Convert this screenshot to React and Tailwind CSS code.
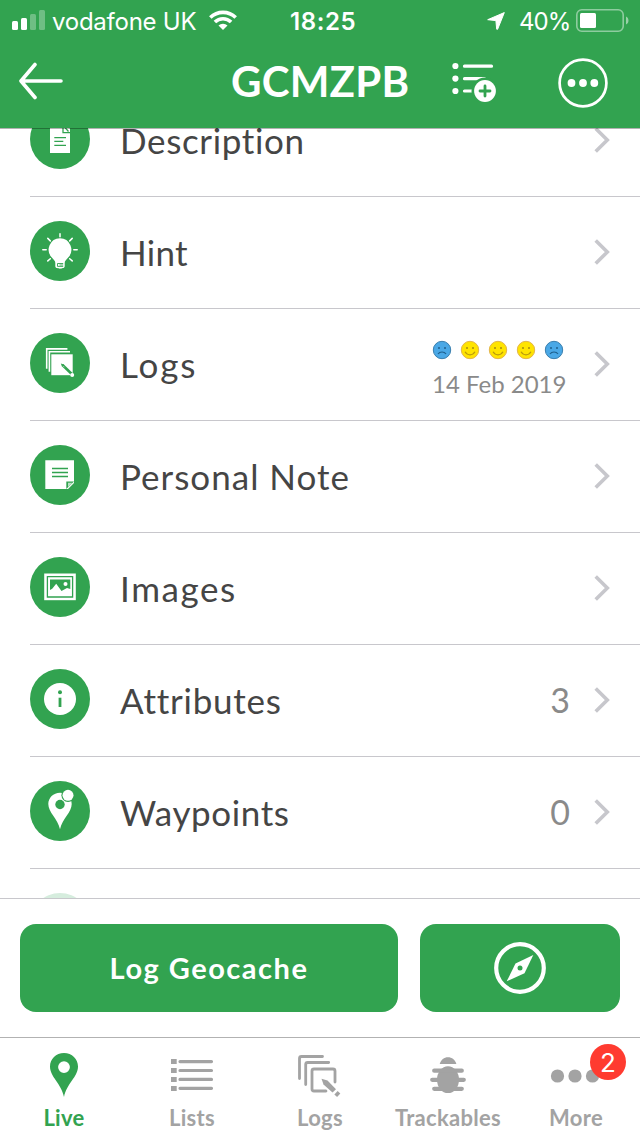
const GREEN = '#32a350';

const DescriptionIcon = () => (
  <>
    <path d="M20 12h13l7 7.5V44H20z" fill="#fff" />
    <path d="M33 14v9.7h7M34.5 18l4 4.5" fill="none" stroke={GREEN} strokeWidth="1.3" />
    <path d="M24.3 28.6h11.7M24.3 32.3h9M24.3 36.3h11.7" stroke={GREEN} strokeWidth="1.3" />
  </>
);

const HintIcon = () => (
  <>
    <path
      d="M30 17.3a11.4 11.4 0 0 1 8 19.4c-2 2-3.2 3.3-3.3 5.2v3c0 1.3-.8 2.1-2 2.2-1 .8-4.4.8-5.4 0-1.2-.1-2-.9-2-2.2v-3c0-1.9-1.3-3.2-3.3-5.2a11.4 11.4 0 0 1 8-19.4z"
      fill="#fff"
    />
    <path
      d="M30 12.8v3M12.8 28.7h3.4M43.8 28.7h3.4M17.8 17.4l2.5 2.5M42.2 17.4l-2.5 2.5M17.8 39.9l2.5-2.2M42.2 39.9l-2.5-2.2"
      stroke="#fff"
      strokeWidth="1.5"
      strokeLinecap="round"
    />
    <path d="M33.2 42.5h-5.7v2.9h5.7M29.5 44h3.7" fill="none" stroke={GREEN} strokeWidth=".9" />
  </>
);

const LogsIcon = () => (
  <>
    <path d="M16.7 35.7V15.9h20.7" fill="none" stroke="#fff" strokeWidth="1.6" />
    <path d="M19.4 38.7V18.7H40" fill="none" stroke="#fff" strokeWidth="1.6" />
    <path d="M21.3 21.3h21.4v20.9H21.3z" fill="#fff" />
    <path d="M32.5 32l9.5 9.2" stroke={GREEN} strokeWidth="2.6" />
    <path d="M30.8 30.5l3.2.9-2 2z" fill={GREEN} />
    <path d="M33.5 33.3l.9.9" stroke="#fff" strokeWidth=".8" />
    <circle cx="42.2" cy="42" r="2" fill="#fff" />
  </>
);

const NoteIcon = () => (
  <>
    <path d="M15.3 15.3H44V38l-6 6H15.3z" fill="#fff" />
    <path d="M36.3 44v-7.6H44z" fill={GREEN} />
    <path d="M38 42v-4.3h4.5z" fill="#fff" opacity=".65" />
    <path d="M22 23.5h16M22 27.5h16M22 31.5h16" stroke={GREEN} strokeWidth="1.5" />
  </>
);

const ImagesIcon = () => (
  <>
    <path d="M14.2 16.5h31.6v26.7H14.2z" fill="#fff" />
    <path d="M17.4 19.7h25.2v20.3H17.4z" fill="none" stroke={GREEN} strokeWidth="1.3" />
    <path d="M20 22.5h20.3v9.5l-3.3-1-5.5 3-5.3-7.3-4 5L20 33z" fill={GREEN} />
    <circle cx="35.5" cy="27" r="2" fill="#fff" />
  </>
);

const AttributesIcon = () => (
  <>
    <circle cx="30" cy="30" r="16" fill="#fff" />
    <circle cx="30" cy="23.3" r="2" fill={GREEN} />
    <path d="M28.6 28.7h2.8V38h-2.8z" fill={GREEN} />
  </>
);

const WaypointsIcon = () => (
  <>
    <path d="M30 11.7c-6.7 0-11.7 5-11.7 11.3 0 8.5 9.4 14.5 11.7 25.3 2.3-10.8 11.7-16.8 11.7-25.3C41.7 16.7 36.7 11.7 30 11.7z" fill="#fff" />
    <circle cx="30" cy="23.5" r="4.7" fill={GREEN} />
    <circle cx="38" cy="14.3" r="6.6" fill={GREEN} />
    <circle cx="38" cy="14.3" r="5.5" fill="#fff" />
  </>
);

const Face = ({ happy }) => (
  <svg className="h-5 w-5" viewBox="0 0 20 20" fill="none">
    <circle cx="10" cy="10" r="8.7" fill={happy ? '#ffe400' : '#4aa8e6'} stroke={happy ? '#e3b54b' : '#3a7fae'} />
    <circle cx="7" cy="8" r="1" fill={happy ? '#a58a14' : '#1f5f8c'} />
    <circle cx="13" cy="8" r="1" fill={happy ? '#a58a14' : '#1f5f8c'} />
    <path
      d={happy ? 'M5 11.800c2.500 4 7.500 4 10 0' : 'M6 14c1.800-2.700 6.200-2.700 8 0'}
      stroke={happy ? '#b8980c' : '#1f5f8c'}
      strokeWidth="1.2"
    />
  </svg>
);

const Chevron = () => (
  <svg className="h-[26px] w-4" viewBox="0 0 16 26" fill="none" stroke="#c7c7cc" strokeWidth="3.6">
    <path d="M1.700 1.500 13.300 13 1.700 24.500" />
  </svg>
);

const rows = [
  { label: 'Description', icon: DescriptionIcon, tracking: 'tracking-[0.65px]' },
  { label: 'Hint', icon: HintIcon, tracking: 'tracking-[0.3px]' },
  { label: 'Logs', icon: LogsIcon, tracking: 'tracking-[1.9px]', faces: [false, true, true, true, false], date: '14 Feb 2019' },
  { label: 'Personal Note', icon: NoteIcon, tracking: 'tracking-[1px]' },
  { label: 'Images', icon: ImagesIcon, tracking: 'tracking-[1.6px]' },
  { label: 'Attributes', icon: AttributesIcon, tracking: 'tracking-[0.75px]', count: 3 },
  { label: 'Waypoints', icon: WaypointsIcon, tracking: 'tracking-[0.6px]', count: 0 },
];

function Row({ row }) {
  const Icon = row.icon;
  return (
    <li className="ml-[30px] flex h-28 shrink-0 border-b border-[#c8c7cc] pt-6 pr-[30px]">
      <svg className="h-[60px] w-[60px] shrink-0" viewBox="0 0 60 60">
        <circle cx="30" cy="30" r="30" fill={GREEN} />
        <Icon />
      </svg>
      <span className={`ml-[30px] flex-1 pt-[7px] text-[35px] leading-[48px] whitespace-nowrap text-[#454545] ${row.tracking}`}>
        {row.label}
      </span>
      {row.faces && (
        <div className="mr-[28px] flex w-[134px] flex-col pt-[7px]">
          <div className="flex gap-2">
            {row.faces.map((happy, i) => (
              <Face key={i} happy={happy} />
            ))}
          </div>
          <span className="mt-[10px] text-[24px] leading-[28px] whitespace-nowrap text-[#8a8a8a]">{row.date}</span>
        </div>
      )}
      {row.count != null && (
        <span className="mr-6 pt-[7px] text-[34px] leading-[48px] text-[#8a8a8a]">{row.count}</span>
      )}
      <div className="pt-[18px]">
        <Chevron />
      </div>
    </li>
  );
}

function StatusBar() {
  return (
    <div className="flex h-10 items-center pl-3 font-[Inter,sans-serif] text-2xl text-white">
      <svg className="h-5 w-[33px]" viewBox="0 0 33 20" fill="#fff">
        <rect x="0" y="11" width="6" height="9" rx="1.5" />
        <rect x="9" y="8" width="6" height="12" rx="1.5" />
        <rect x="18" y="4" width="6" height="16" rx="1.5" opacity=".3" />
        <rect x="27" y="0" width="6" height="20" rx="1.5" opacity=".3" />
      </svg>
      <span className="ml-[7px] w-[146px] pt-[3px] tracking-[-0.25px] whitespace-nowrap">vodafone UK</span>
      <svg className="ml-[11px] h-5 w-7" viewBox="0 0 28 20" fill="none" stroke="#fff" strokeWidth="3.6">
        <path d="M1.300 7.500a18.300 18.300 0 0 1 25.400 0M5.900 12a11.600 11.600 0 0 1 16.200 0" />
        <path d="M14 20l-4.500-4.500a6.500 6.500 0 0 1 9 0z" fill="#fff" stroke="none" />
      </svg>
      <span className="ml-[53px] w-[66px] pt-[3px] font-semibold tracking-[0.6px] whitespace-nowrap">18:25</span>
      <svg className="mt-[2px] ml-[131px] h-[18px] w-[18px]" viewBox="0 0 18 18" fill="#fff" stroke="#fff" strokeLinejoin="round">
        <path d="M17.3.6.7 7.700l8.200.9.8 8.600.9.100z" />
      </svg>
      <span className="ml-[14px] w-[50px] pt-[3px] tracking-[-1px] whitespace-nowrap">40%</span>
      <svg className="ml-[7px] h-[23px] w-[53px]" viewBox="0 0 53 23">
        <rect x=".8" y=".8" width="46.4" height="21.4" rx="5" fill="none" stroke="#fff" strokeOpacity=".45" strokeWidth="1.6" />
        <rect x="4" y="4" width="16" height="15" rx="1.5" fill="#fff" />
        <path d="M50 7.500c3.300 1.300 3.300 6.700 0 8z" fill="#fff" opacity=".5" />
      </svg>
    </div>
  );
}

function NavBar() {
  return (
    <div className="flex h-[88px] text-white">
      <svg className="mt-[22px] ml-[18px] h-[38px] w-[46px]" viewBox="0 0 46 38" fill="none" stroke="#fff" strokeWidth="3.6" strokeLinecap="round" strokeLinejoin="round">
        <path d="M17 2.500 3 19l14 16.500M3 19h40" />
      </svg>
      <h1 className="ml-[167px] w-[180px] pt-[14px] text-[42px] leading-[54px] font-bold tracking-[0.2px] whitespace-nowrap">
        GCMZPB
      </h1>
      <svg className="mt-[22px] ml-[41px] h-[41px] w-[45px]" viewBox="0 0 45 41">
        <g fill="#fff">
          <circle cx="3.4" cy="4" r="3.1" />
          <circle cx="3.4" cy="16.6" r="3.1" />
          <circle cx="3.4" cy="29" r="3.1" />
        </g>
        <path d="M12.500 4.200h27M12.500 16.700h20M12.500 29h10" stroke="#fff" strokeWidth="3.2" strokeLinecap="round" />
        <circle cx="33" cy="29" r="13.5" fill={GREEN} />
        <circle cx="33" cy="29" r="10.9" fill="#fff" />
        <path d="M33 24v10M28 29h10" stroke={GREEN} strokeWidth="2.8" strokeLinecap="round" />
      </svg>
      <svg className="mt-[18px] ml-[61px] h-[50px] w-[50px]" viewBox="0 0 50 50">
        <circle cx="25" cy="25" r="23.4" fill="none" stroke="#fff" strokeWidth="2.7" />
        <g fill="#fff">
          <circle cx="13.5" cy="25" r="3.9" />
          <circle cx="25" cy="25" r="3.9" />
          <circle cx="36.3" cy="25" r="3.9" />
        </g>
      </svg>
    </div>
  );
}

const LiveTab = () => (
  <path
    fillRule="evenodd"
    d="M64 13c-8 0-14 6-14 13.600C50 37 61.300 43.500 64 57c2.700-13.500 14-20 14-30.400C78 19 72 13 64 13zm0 8.200a5.900 5.900 0 1 1 0 11.800 5.900 5.900 0 0 1 0-11.800z"
    fill={GREEN}
  />
);

const ListsTab = () => (
  <>
    <path d="M43 19h5.700v5H43zM43 28h5.700v5H43zM43 37h5.700v5H43zM43 46h5.700v5H43z" fill="#a3a3a3" />
    <path d="M52 21.600h31.500M52 30.500h31.500M52 39.400h31.500M52 48.300h31.500" stroke="#a3a3a3" strokeWidth="3.2" strokeLinecap="round" />
  </>
);

const LogsTab = () => (
  <>
    <g fill="none" stroke="#a3a3a3" strokeWidth="2.8" strokeLinecap="round">
      <path d="M43.500 38.500V18.500q0-2 2-2h21" />
      <path d="M49.700 44.500V24.500q0-2 2-2h21" />
      <path d="M70 51H58q-2 0-2-2V31q0-2 2-2h19q2 0 2 2v11" />
    </g>
    <path d="M65.500 39l15.500 15.500" stroke="#fff" strokeWidth="7.5" />
    <path d="M65.500 38.800l6 1.700L80 49.200 76.500 52.500 67.500 44.500z" fill="#a3a3a3" />
    <path d="M80 52.800l2.700 2.500" stroke="#a3a3a3" strokeWidth="4.8" />
  </>
);

const TrackablesTab = () => (
  <>
    <path d="M55.700 24c1.200-4 4.400-6.700 8.300-6.700s7.200 2.700 8.400 6.700z" fill="#a3a3a3" />
    <ellipse cx="64" cy="39.7" rx="11" ry="13.4" fill="#a3a3a3" />
    <path d="M50.200 30.700h27.600M48.200 39.800h31.600M50.200 48.800h27.600" stroke="#a3a3a3" strokeWidth="4.2" strokeLinecap="round" />
  </>
);

const MoreTab = () => (
  <g fill="#a3a3a3">
    <circle cx="45.5" cy="36" r="6.6" />
    <circle cx="63" cy="36" r="6.6" />
    <circle cx="80.5" cy="36" r="6.6" />
  </g>
);

const tabs = [
  { label: 'Live', icon: LiveTab, active: true },
  { label: 'Lists', icon: ListsTab },
  { label: 'Logs', icon: LogsTab },
  { label: 'Trackables', icon: TrackablesTab },
  { label: 'More', icon: MoreTab, badge: 2 },
];

export default function App() {
  return (
    <div className="flex h-[1136px] w-[640px] flex-col overflow-hidden bg-white font-[Lato,sans-serif]">
      <header className="relative z-10 h-[129px] shrink-0 border-b border-black/30 bg-[#32a350] bg-clip-padding">
        <StatusBar />
        <NavBar />
      </header>

      <main className="-mt-px h-[770px] shrink-0 overflow-hidden">
        <ul className="-mt-[43px] flex flex-col">
          {rows.map((row) => (
            <Row key={row.label} row={row} />
          ))}
          <li className="ml-[30px] pt-6">
            <div className="h-[60px] w-[60px] rounded-full bg-[#d6edde]" />
          </li>
        </ul>
      </main>

      <div className="flex h-[139px] shrink-0 gap-[22px] border-t border-[#c8c7cc] px-5 pt-[25px]">
        <button className="h-[88px] w-[378px] rounded-2xl bg-[#32a350] text-[29px] font-bold tracking-[1.5px] text-white">
          Log Geocache
        </button>
        <button className="flex h-[88px] w-[200px] items-center justify-center rounded-2xl bg-[#32a350]">
          <svg className="h-[52px] w-[52px]" viewBox="0 0 52 52">
            <circle cx="26" cy="26" r="23.8" fill="none" stroke="#fff" strokeWidth="4.2" />
            <path d="M39.300 13 30.500 31.200 12.700 39.300 21.500 21.500z" fill="#fff" />
            <circle cx="26" cy="26" r="2.5" fill={GREEN} />
          </svg>
        </button>
      </div>

      <nav className="flex h-[99px] shrink-0 border-t border-[#b2b2b2]">
        {tabs.map((tab) => {
          const Icon = tab.icon;
          return (
            <div key={tab.label} className="relative flex w-32 flex-col items-center">
              <svg className="mt-0.5 h-16 w-32" viewBox="0 0 128 64">
                <Icon />
              </svg>
              <span className={`text-[22px] leading-7 font-bold tracking-[0.3px] ${tab.active ? 'text-[#32a350]' : 'text-[#a3a3a3]'}`}>
                {tab.label}
              </span>
              {tab.badge && (
                <span className="absolute top-[6px] left-[78px] flex h-9 w-9 items-center justify-center rounded-full bg-[#ff3b30] font-[Inter,sans-serif] text-[26px] text-white">
                  {tab.badge}
                </span>
              )}
            </div>
          );
        })}
      </nav>
    </div>
  );
}
